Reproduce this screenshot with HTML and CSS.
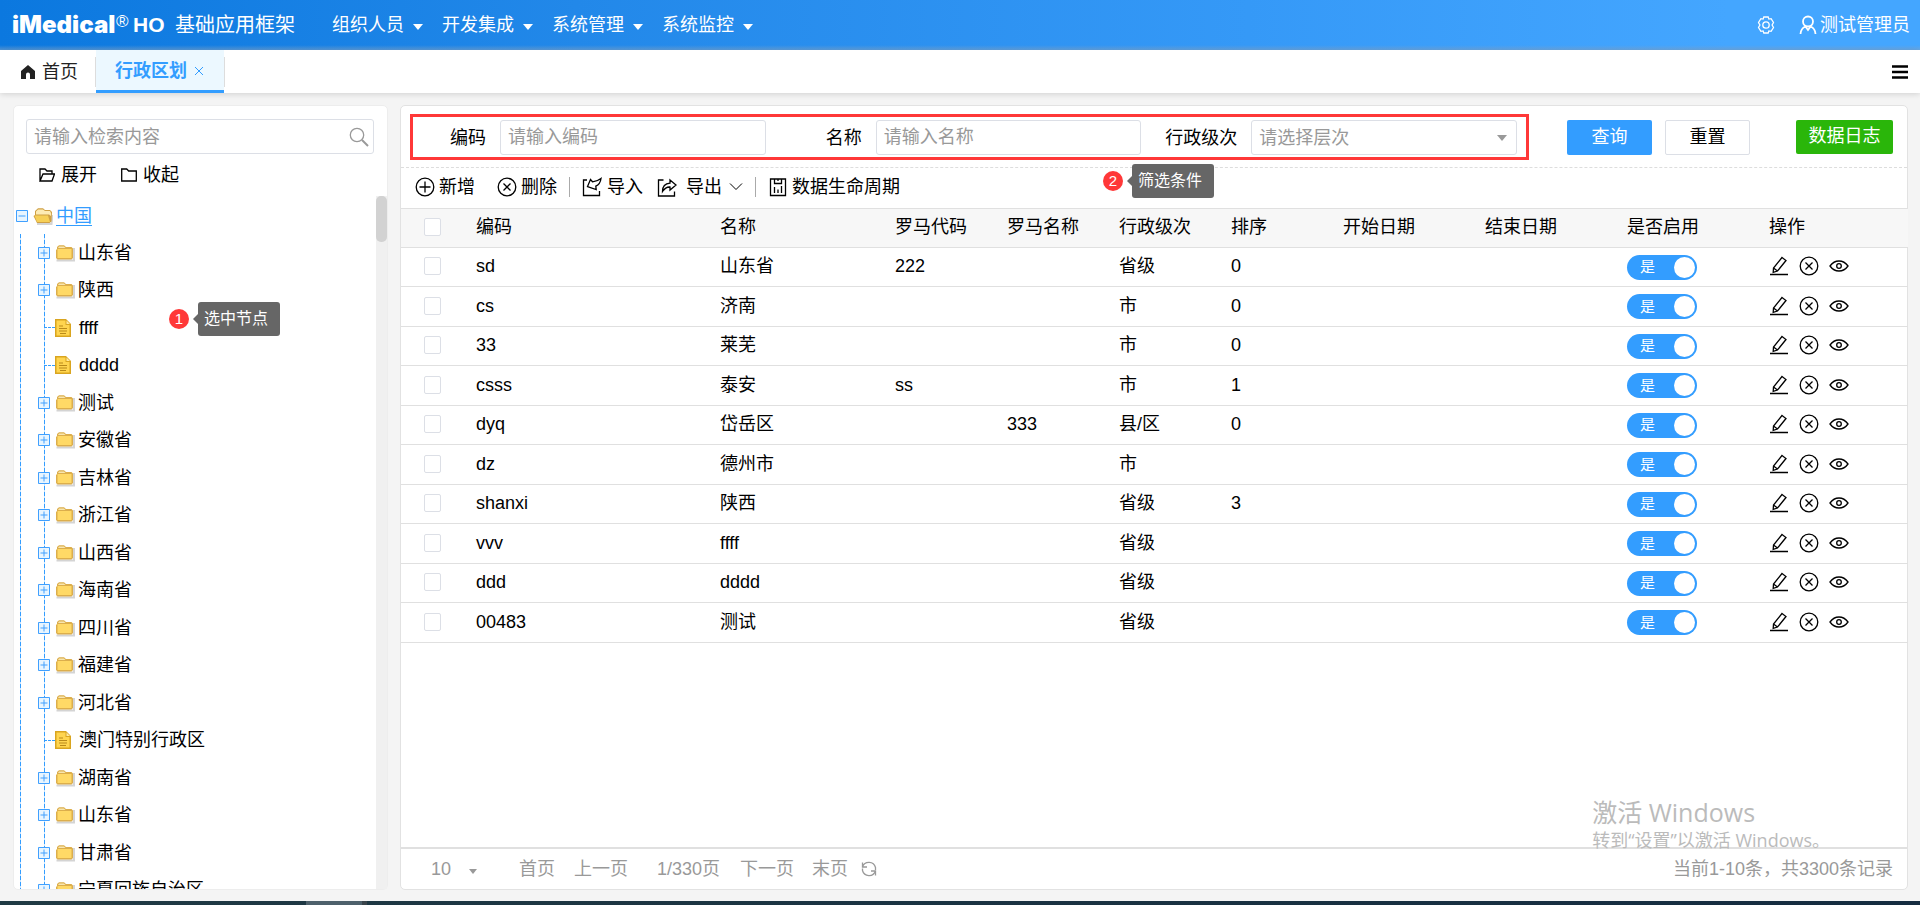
FILE: index.html
```html
<!DOCTYPE html>
<html lang="zh-CN">
<head>
<meta charset="utf-8">
<title>行政区划</title>
<link rel="stylesheet" href="styles.css">
</head>
<body>
<svg class="sprite" aria-hidden="true">
  <symbol id="i-plus" viewBox="0 0 20 20"><circle cx="10" cy="10" r="8.8"/><path d="M10 4.500v11M4.500 10h11"/></symbol>
  <symbol id="i-close" viewBox="0 0 20 20"><circle cx="10" cy="10" r="8.8"/><path d="M6.500 6.500l7 7M13.500 6.500l-7 7"/></symbol>
  <symbol id="i-import" viewBox="0 0 20 20"><path d="M5 3H1.500v15.500h16V14"/><path d="M19 1.500c-.5 4-2.500 6.500-5.200 7.700l.4 3.300L5.500 9.500 8.500 2.500l2 2.300C13.500 4.600 16.500 3.500 19 1.500z"/></symbol>
  <symbol id="i-export" viewBox="0 0 20 20"><path d="M6.500 3H1.500v16h16v-4.500"/><path d="M13 3l6 5-6 5v-3c-3.500-.3-5.500 1.500-7.500 4.500 0-5 3-8 7.500-8.300z"/></symbol>
  <symbol id="i-chart" viewBox="0 0 20 20"><path d="M2.500 2h15v16.500h-15zM6.500 2v4.500h7V2M10 2v2M6.500 10v6M10 12.500V16M13.500 9v7"/></symbol>
  <symbol id="i-edit" viewBox="0 0 20 20"><path d="M13 1.500l4 3L8.500 15l-4.300 1.300.3-4.300zM4.500 12l4 3M1 18.500h18"/></symbol>
  <symbol id="i-eye" viewBox="0 0 20 20"><path d="M1 10c2.500-3.500 5.500-5 9-5s6.500 1.500 9 5c-2.500 3.500-5.500 5-9 5s-6.500-1.500-9-5z"/><circle cx="10" cy="10" r="2.300"/></symbol>
  <symbol id="i-expand" viewBox="0 0 12 12"><path d="M.5.500h11v11H.5zM2.500 6h7M6 2.500v7"/></symbol>
  <symbol id="i-collapse" viewBox="0 0 12 12"><path d="M.5.500h11v11H.5zM2.500 6h7"/></symbol>
  <symbol id="i-folder" viewBox="0 0 20 18"><path d="M1.500 16.500h17.500V4" stroke="#aaa" stroke-opacity=".5" stroke-width="2" fill="none"/><path d="M2 5V3l2-1.800h5L11 3h5.500l1.500 1.500V14l-1.500 1.500h-14L1 14V6z" fill="#dcae4c"/><path d="M4 2.500h5L10.500 4H3z" fill="#f7e6b0"/><path d="M2.500 5h14v9h-14z" fill="#ffd966"/></symbol>
  <symbol id="i-folder-open" viewBox="0 0 20 18"><path d="M4 17h14.500l1-9" stroke="#aaa" stroke-opacity=".5" stroke-width="2" fill="none"/><path d="M2 8V4l3-2.800h5L12 3h5l2 2-.5 9.500-2 1.500H4L.5 9z" fill="#cfa044"/><path d="M5 2.500h5L12 4h5l1 2v3l-2-1.500H3V4.500z" fill="#fdebb4"/><path d="M1.500 8.500H15L17 15H4z" fill="#f6cf57"/></symbol>
  <symbol id="i-doc" viewBox="0 0 16 18"><path d="M0 0h11l5 5v13H0z" fill="#d9a520"/><path d="M1.500 1.500h9V6h4v10.500h-13z" fill="#ffd54f"/><path d="M11.500 1.500l3.500 3.500h-3.500z" fill="#ffe9a0"/><path d="M4 7h4M4 9.500h8M4 12h8M5 14.500h6" stroke="#b98a1a" stroke-width="1.200"/></symbol>
</svg>

<header class="topbar">
  <div class="brand"><span class="brand-name">iMedical</span><span class="brand-reg">®</span><span class="brand-ho">HO</span><span class="brand-title">基础应用框架</span></div>
  <nav class="menu">
    <a href="#">组织人员<i class="caret"></i></a>
    <a href="#">开发集成<i class="caret"></i></a>
    <a href="#">系统管理<i class="caret"></i></a>
    <a href="#">系统监控<i class="caret"></i></a>
  </nav>
  <button class="gear" aria-label="设置"><svg class="icon" viewBox="0 0 18 18"><path d="M6.800 1h4.400l.7 2.100 2.200-.4L16.500 6.500 15.100 9l1.400 2.500-2.400 3.800-2.200-.4-.7 2.100H6.800l-.7-2.100-2.200.4-2.400-3.800L2.900 9 1.500 6.500l2.400-3.800 2.200.4z"/><circle cx="9" cy="9" r="3.200"/></svg></button>
  <a class="user" href="#"><svg class="icon user-icon" viewBox="0 0 18 20"><circle cx="9" cy="6.500" r="5"/><path d="M1.500 19c.2-4 2-6.200 5-7.500L9 15l2.500-3.500c3 1.300 4.800 3.500 5 7.500"/></svg>测试管理员</a>
</header>

<div class="tabs">
  <a class="tab tab-home" href="#"><svg class="home" viewBox="0 0 14 14"><path d="M7 0l7 6v8H9V9.500a2 2 0 0 0-4 0V14H0V6z"/></svg>首页</a>
  <a class="tab tab-active" href="#">行政区划<svg class="icon tab-close" viewBox="0 0 10 10"><path d="M1 1l8 8M9 1L1 9"/></svg></a>
  <i class="tab-sep"></i>
  <button class="burger" aria-label="菜单"><svg viewBox="0 0 16 14"><path d="M0 1.500h16M0 7h16M0 12.500h16" stroke="#000" stroke-width="2.600"/></svg></button>
</div>

<main class="workspace">
  <aside class="panel side">
    <label class="search"><input type="search" placeholder="请输入检索内容" aria-label="检索内容"><svg class="icon search-icon" viewBox="0 0 20 20"><circle cx="8" cy="8" r="6.700"/><path d="M13 13l6 6" stroke-width="2"/></svg></label>
    <div class="tree-actions">
      <button><svg class="icon small-icon" viewBox="0 0 16 16"><path d="M1 14V2h5l2 2h5v3M1 14l3-7h11.500L13 14z"/></svg>展开</button>
      <button><svg class="icon small-icon" viewBox="0 0 16 16"><path d="M.7 14V2h5l2 2h7.600v10z"/></svg>收起</button>
    </div>
    <div class="tree-area">
      <div class="tree">
        <div class="node root"><svg class="icon box"><use href="#i-collapse"/></svg><svg class="folder"><use href="#i-folder-open"/></svg><a href="#">中国</a></div>
        <ul class="branch">
          <li class="node"><svg class="icon box"><use href="#i-expand"/></svg><svg class="folder"><use href="#i-folder"/></svg>山东省</li>
          <li class="node"><svg class="icon box"><use href="#i-expand"/></svg><svg class="folder"><use href="#i-folder"/></svg>陕西</li>
          <li class="node leaf"><svg class="doc"><use href="#i-doc"/></svg>ffff</li>
          <li class="node leaf"><svg class="doc"><use href="#i-doc"/></svg>dddd</li>
          <li class="node"><svg class="icon box"><use href="#i-expand"/></svg><svg class="folder"><use href="#i-folder"/></svg>测试</li>
          <li class="node"><svg class="icon box"><use href="#i-expand"/></svg><svg class="folder"><use href="#i-folder"/></svg>安徽省</li>
          <li class="node"><svg class="icon box"><use href="#i-expand"/></svg><svg class="folder"><use href="#i-folder"/></svg>吉林省</li>
          <li class="node"><svg class="icon box"><use href="#i-expand"/></svg><svg class="folder"><use href="#i-folder"/></svg>浙江省</li>
          <li class="node"><svg class="icon box"><use href="#i-expand"/></svg><svg class="folder"><use href="#i-folder"/></svg>山西省</li>
          <li class="node"><svg class="icon box"><use href="#i-expand"/></svg><svg class="folder"><use href="#i-folder"/></svg>海南省</li>
          <li class="node"><svg class="icon box"><use href="#i-expand"/></svg><svg class="folder"><use href="#i-folder"/></svg>四川省</li>
          <li class="node"><svg class="icon box"><use href="#i-expand"/></svg><svg class="folder"><use href="#i-folder"/></svg>福建省</li>
          <li class="node"><svg class="icon box"><use href="#i-expand"/></svg><svg class="folder"><use href="#i-folder"/></svg>河北省</li>
          <li class="node leaf"><svg class="doc"><use href="#i-doc"/></svg>澳门特别行政区</li>
          <li class="node"><svg class="icon box"><use href="#i-expand"/></svg><svg class="folder"><use href="#i-folder"/></svg>湖南省</li>
          <li class="node"><svg class="icon box"><use href="#i-expand"/></svg><svg class="folder"><use href="#i-folder"/></svg>山东省</li>
          <li class="node"><svg class="icon box"><use href="#i-expand"/></svg><svg class="folder"><use href="#i-folder"/></svg>甘肃省</li>
          <li class="node"><svg class="icon box"><use href="#i-expand"/></svg><svg class="folder"><use href="#i-folder"/></svg>宁夏回族自治区</li>
        </ul>
      </div>
      <div class="scroll-track"><div class="scroll-thumb"></div></div>
    </div>
    <div class="callout callout-node"><b>1</b><span>选中节点</span></div>
  </aside>

  <section class="panel content">
    <form class="filters">
      <div class="filter-box">
        <div class="field first"><label for="code">编码</label><input id="code" type="text" placeholder="请输入编码"></div>
        <div class="field"><label for="name">名称</label><input id="name" type="text" placeholder="请输入名称"></div>
        <div class="field"><label for="level">行政级次</label><div class="select"><select id="level"><option>请选择层次</option></select></div></div>
      </div>
      <div class="filter-buttons">
        <button type="button" class="btn primary">查询</button>
        <button type="button" class="btn plain">重置</button>
        <button type="button" class="btn log">数据日志</button>
      </div>
    </form>
    <div class="toolbar">
      <button class="tool add"><svg class="icon"><use href="#i-plus"/></svg>新增</button>
      <button class="tool del"><svg class="icon"><use href="#i-close"/></svg>删除</button>
      <button class="tool imp"><svg class="icon"><use href="#i-import"/></svg>导入</button>
      <button class="tool exp"><svg class="icon"><use href="#i-export"/></svg>导出<svg class="icon chevron" viewBox="0 0 14 10"><path d="M1 1.500l6 6 6-6"/></svg></button>
      <button class="tool life"><svg class="icon"><use href="#i-chart"/></svg>数据生命周期</button>
      <div class="callout callout-filter"><b>2</b><span>筛选条件</span></div>
    </div>
    <table class="grid">
      <colgroup><col class="c-check"><col class="c-code"><col class="c-name"><col class="c-s"><col class="c-s"><col class="c-s"><col class="c-s"><col class="c-m"><col class="c-m"><col class="c-m"><col class="c-op"></colgroup>
      <thead><tr><th><input type="checkbox" aria-label="全选"></th><th>编码</th><th>名称</th><th>罗马代码</th><th>罗马名称</th><th>行政级次</th><th>排序</th><th>开始日期</th><th>结束日期</th><th>是否启用</th><th>操作</th></tr></thead>
      <tbody>
        <tr><td><input type="checkbox" aria-label="选择"></td><td>sd</td><td>山东省</td><td>222</td><td></td><td>省级</td><td>0</td><td></td><td></td><td><label class="toggle">是<input type="checkbox" checked></label></td><td><div class="ops"><button aria-label="编辑"><svg class="icon"><use href="#i-edit"/></svg></button><button aria-label="删除"><svg class="icon"><use href="#i-close"/></svg></button><button aria-label="查看"><svg class="icon"><use href="#i-eye"/></svg></button></div></td></tr>
        <tr><td><input type="checkbox" aria-label="选择"></td><td>cs</td><td>济南</td><td></td><td></td><td>市</td><td>0</td><td></td><td></td><td><label class="toggle">是<input type="checkbox" checked></label></td><td><div class="ops"><button aria-label="编辑"><svg class="icon"><use href="#i-edit"/></svg></button><button aria-label="删除"><svg class="icon"><use href="#i-close"/></svg></button><button aria-label="查看"><svg class="icon"><use href="#i-eye"/></svg></button></div></td></tr>
        <tr><td><input type="checkbox" aria-label="选择"></td><td>33</td><td>莱芜</td><td></td><td></td><td>市</td><td>0</td><td></td><td></td><td><label class="toggle">是<input type="checkbox" checked></label></td><td><div class="ops"><button aria-label="编辑"><svg class="icon"><use href="#i-edit"/></svg></button><button aria-label="删除"><svg class="icon"><use href="#i-close"/></svg></button><button aria-label="查看"><svg class="icon"><use href="#i-eye"/></svg></button></div></td></tr>
        <tr><td><input type="checkbox" aria-label="选择"></td><td>csss</td><td>泰安</td><td>ss</td><td></td><td>市</td><td>1</td><td></td><td></td><td><label class="toggle">是<input type="checkbox" checked></label></td><td><div class="ops"><button aria-label="编辑"><svg class="icon"><use href="#i-edit"/></svg></button><button aria-label="删除"><svg class="icon"><use href="#i-close"/></svg></button><button aria-label="查看"><svg class="icon"><use href="#i-eye"/></svg></button></div></td></tr>
        <tr><td><input type="checkbox" aria-label="选择"></td><td>dyq</td><td>岱岳区</td><td></td><td>333</td><td>县/区</td><td>0</td><td></td><td></td><td><label class="toggle">是<input type="checkbox" checked></label></td><td><div class="ops"><button aria-label="编辑"><svg class="icon"><use href="#i-edit"/></svg></button><button aria-label="删除"><svg class="icon"><use href="#i-close"/></svg></button><button aria-label="查看"><svg class="icon"><use href="#i-eye"/></svg></button></div></td></tr>
        <tr><td><input type="checkbox" aria-label="选择"></td><td>dz</td><td>德州市</td><td></td><td></td><td>市</td><td></td><td></td><td></td><td><label class="toggle">是<input type="checkbox" checked></label></td><td><div class="ops"><button aria-label="编辑"><svg class="icon"><use href="#i-edit"/></svg></button><button aria-label="删除"><svg class="icon"><use href="#i-close"/></svg></button><button aria-label="查看"><svg class="icon"><use href="#i-eye"/></svg></button></div></td></tr>
        <tr><td><input type="checkbox" aria-label="选择"></td><td>shanxi</td><td>陕西</td><td></td><td></td><td>省级</td><td>3</td><td></td><td></td><td><label class="toggle">是<input type="checkbox" checked></label></td><td><div class="ops"><button aria-label="编辑"><svg class="icon"><use href="#i-edit"/></svg></button><button aria-label="删除"><svg class="icon"><use href="#i-close"/></svg></button><button aria-label="查看"><svg class="icon"><use href="#i-eye"/></svg></button></div></td></tr>
        <tr><td><input type="checkbox" aria-label="选择"></td><td>vvv</td><td>ffff</td><td></td><td></td><td>省级</td><td></td><td></td><td></td><td><label class="toggle">是<input type="checkbox" checked></label></td><td><div class="ops"><button aria-label="编辑"><svg class="icon"><use href="#i-edit"/></svg></button><button aria-label="删除"><svg class="icon"><use href="#i-close"/></svg></button><button aria-label="查看"><svg class="icon"><use href="#i-eye"/></svg></button></div></td></tr>
        <tr><td><input type="checkbox" aria-label="选择"></td><td>ddd</td><td>dddd</td><td></td><td></td><td>省级</td><td></td><td></td><td></td><td><label class="toggle">是<input type="checkbox" checked></label></td><td><div class="ops"><button aria-label="编辑"><svg class="icon"><use href="#i-edit"/></svg></button><button aria-label="删除"><svg class="icon"><use href="#i-close"/></svg></button><button aria-label="查看"><svg class="icon"><use href="#i-eye"/></svg></button></div></td></tr>
        <tr><td><input type="checkbox" aria-label="选择"></td><td>00483</td><td>测试</td><td></td><td></td><td>省级</td><td></td><td></td><td></td><td><label class="toggle">是<input type="checkbox" checked></label></td><td><div class="ops"><button aria-label="编辑"><svg class="icon"><use href="#i-edit"/></svg></button><button aria-label="删除"><svg class="icon"><use href="#i-close"/></svg></button><button aria-label="查看"><svg class="icon"><use href="#i-eye"/></svg></button></div></td></tr>
      </tbody>
    </table>
    <footer class="pager">
      <div class="select page-size"><select aria-label="每页条数"><option>10</option></select></div>
      <a class="pg-first" href="#">首页</a>
      <a class="pg-prev" href="#">上一页</a>
      <span class="pg-now">1/330页</span>
      <a class="pg-next" href="#">下一页</a>
      <a class="pg-last" href="#">末页</a>
      <button class="refresh" aria-label="刷新"><svg class="icon" viewBox="0 0 16 16"><path d="M1.500 6A6.800 6.800 0 0 1 14.500 6.500V9M1.500 1.500V6H6M14.500 10A6.800 6.800 0 0 1 1.500 9.500V7.500M14.500 14.500V10H10"/></svg></button>
      <span class="total">当前1-10条，共3300条记录</span>
    </footer>
  </section>
</main>
<div class="taskbar"></div>
<div class="watermark"><div class="wm-title">激活 Windows</div><div>转到“设置”以激活 Windows。</div></div>
</body>
</html>
```
FILE: styles.css
```css
* { box-sizing: border-box; }
body {
  margin: 0;
  height: 100vh;
  display: flex;
  flex-direction: column;
  overflow: hidden;
  background: #f4f4f4;
  color: #000;
  font: 400 18px/24px "Liberation Sans", "Noto Sans CJK SC", sans-serif;
}
a { color: inherit; text-decoration: none; }
button, input, select { font: inherit; color: inherit; }
button { border: 0; padding: 0; background: none; display: flex; align-items: center; white-space: nowrap; }
.sprite { display: none; }
.icon { width: 20px; height: 20px; fill: none; stroke: currentColor; stroke-width: 1.3; flex: none; }

/* top bar */
.topbar {
  flex: none;
  height: 50px;
  display: flex;
  align-items: center;
  padding: 0 10px 0 12px;
  color: #fff;
  background: linear-gradient(to bottom, transparent 45px, rgba(130, 170, 210, .6)), linear-gradient(to right, #0b78df, #2288e9 30%, #3599f7 65%, #44a6ff 90%);
}
.brand { display: flex; align-items: center; width: 320px; white-space: nowrap; }
.brand-name { font: 900 24px/30px Inter, sans-serif; width: 104px; }
.brand-reg { font: 400 17px/24px "Liberation Sans", sans-serif; width: 17px; align-self: flex-start; }
.brand-ho { font: 700 21px/28px "Liberation Sans", sans-serif; width: 42px; }
.brand-title { font-size: 20px; }
.menu { display: flex; flex: 1; }
.menu a { display: flex; align-items: center; gap: 9px; width: 110px; white-space: nowrap; }
.caret { border: 5px solid transparent; border-top: 6px solid currentColor; border-bottom: 0; margin-top: 4px; }
.gear { color: #fff; margin-right: 24px; }
.gear .icon { width: 18px; height: 18px; }
.user { display: flex; align-items: center; gap: 3px; }
.user-icon { width: 18px; stroke-width: 1.8; }

/* tabs */
.tabs {
  flex: none;
  height: 43px;
  display: flex;
  align-items: center;
  background: #fff;
  box-shadow: 0 1px 6px rgba(0, 0, 0, .15);
  position: relative;
}
.tab { display: flex; align-items: center; color: #222; }
.tab-home { width: 96px; height: 30px; padding-left: 21px; gap: 7px; border-right: 1px solid #ddd; }
.tab-active {
  width: 128px;
  height: 43px;
  padding: 2px 0 0 19px;
  gap: 7px;
  color: #339dff;
  font-weight: 700;
  background: #ecf8ff;
  border-bottom: 3px solid #339dff;
}
.tab-sep { width: 1px; height: 30px; background: #ddd; }
.home { width: 14px; height: 14px; fill: #222; }
.tab-close { width: 10px; height: 10px; stroke-width: 1; }
.burger { margin: 0 12px 0 auto; }
.burger svg { width: 16px; height: 14px; }

/* panels */
.workspace { flex: 1; min-height: 0; display: flex; gap: 12px; padding: 12px 12px 11px 13px; }
.panel { background: #fff; border: 1px solid #e2e2e2; border-radius: 5px; display: flex; flex-direction: column; position: relative; }
.side { width: 375px; flex: none; border-color: #ededed; }
.content { flex: 1; min-width: 0; }
input::placeholder { color: #999; opacity: 1; }

.search { margin: 13px 13px 0 12px; height: 35px; border: 1px solid #dcdfe6; border-radius: 3px; display: flex; align-items: center; padding: 0 4px 0 7px; color: #999; }
.search input { flex: 1; min-width: 0; border: 0; padding: 0; background: none; outline: 0; appearance: none; }
.tree-actions { display: flex; gap: 24px; padding: 9px 0 0 25px; }
.tree-actions button { gap: 6px; }
.small-icon { width: 16px; height: 16px; }
.tree-area { flex: 1; min-height: 0; margin-top: 9px; display: flex; overflow: hidden; }
.tree { flex: 1; overflow: hidden; padding: 0 0 0 2px; }
.node { display: flex; align-items: center; height: 38px; gap: 5px; white-space: nowrap; }
.branch .node:nth-child(odd) { height: 37px; }
.root { height: 38px; padding-top: 2px; }
.root a { color: #339dff; text-decoration: underline; text-underline-offset: 3px; text-decoration-thickness: 1px; }
.box { width: 12px; height: 12px; stroke-width: 1; color: #40a0ff; background: #e8f5ff; }
.folder { width: 20px; height: 18px; margin-right: -2px; flex: none; }
.doc { width: 16px; height: 18px; margin-right: 3px; flex: none; }
.branch {
  list-style: none;
  margin: 0 0 0 4px;
  padding: 0 0 0 18px;
  background:
    repeating-linear-gradient(to bottom, #339dff 0 4px, #c4e2ff 4px 6px) 0 0 / 1px 100% no-repeat,
    repeating-linear-gradient(to bottom, #339dff 0 4px, #c4e2ff 4px 6px) 24px 0 / 1px 100% no-repeat;
}
.leaf::before { content: ""; width: 11px; margin-left: 6px; margin-right: -5px; border-top: 1px dashed #339dff; }
.scroll-track { width: 11px; background: #f0f0f0; }
.scroll-thumb { height: 46px; border-radius: 5px; background: #d2d2d2; }

/* callouts */
.callout { position: absolute; display: flex; align-items: center; gap: 9px; font-size: 16px; line-height: 34px; color: #fff; }
.callout b { width: 20px; height: 20px; border-radius: 50%; background: #ff3838; font-weight: 400; font-size: 15px; line-height: 20px; text-align: center; }
.callout span { width: 82px; height: 34px; padding-left: 6px; border-radius: 3px; background: #666; position: relative; }
.callout span::before { content: ""; position: absolute; left: -5px; top: 12px; border: 5px solid transparent; border-right-color: #666; border-left: 0; }
.callout-node { left: 155px; top: 196px; }
.callout-filter { left: 702px; top: -4px; }

/* filters */
.filters { display: flex; align-items: flex-start; padding: 8px 14px 7px 9px; border-bottom: 1px dashed #ddd; }
.filter-box { flex: 1; min-width: 0; display: flex; border: 3px solid #ff3838; padding: 3px 9px 2px 0; }
.field { flex: 1 1 376px; min-width: 0; display: flex; align-items: center; }
.field.first { flex: 1 1 353px; }
.field label { width: 110px; padding-right: 14px; text-align: right; flex: none; white-space: nowrap; }
.field.first label { width: 87px; }
.field > input, .field > .select { flex: 1; min-width: 0; height: 35px; border: 1px solid #dcdfe6; border-radius: 3px; background: #fff; }
.field > input { padding: 0 7px; }
.select { display: flex; position: relative; color: #999; }
.select select { flex: 1; border: 0; padding: 0 7px; background: none; appearance: none; outline: 0; }
.select::after { content: ""; position: absolute; right: 9px; top: 14px; border: 5px solid transparent; border-top: 6px solid #999; border-bottom: 0; pointer-events: none; }
.filter-buttons { display: flex; gap: 13px; padding: 6px 0 0 38px; }
.btn { height: 35px; width: 85px; border-radius: 2px; justify-content: center; padding-bottom: 2px; }
.primary { background: #339dff; color: #fff; }
.plain { border: 1px solid #dcdfe6; }
.log { width: 97px; height: 34px; margin-left: 33px; background: #2ab60a; color: #fff; }

/* toolbar */
.toolbar { height: 41px; display: flex; align-items: center; padding: 0 0 3px 14px; position: relative; border-bottom: 1px solid #e0e0e0; }
.tool { gap: 4px; height: 20px; }
.add { width: 82px; }
.del { width: 72px; }
.imp { width: 88px; border-left: 1px solid #aaa; padding-left: 12px; gap: 5px; }
.exp { width: 98px; gap: 9px; }
.exp .chevron { margin-left: -2px; }
.life { border-left: 1px solid #aaa; padding-left: 12px; }
.chevron { width: 14px; height: 10px; stroke-width: 1; }

/* data grid */
.grid { width: 100%; table-layout: fixed; border-collapse: separate; border-spacing: 0; }
.c-check { width: 65px; }
.c-code { width: 244px; }
.c-name { width: 175px; }
.c-s { width: 112px; }
.c-m { width: 142px; }
.c-op { width: 149px; }
.grid th, .grid td { height: 39px; padding: 0 0 2px 10px; border-bottom: 1px solid #e0e0e0; text-align: left; font-weight: inherit; line-height: 24px; white-space: nowrap; }
.grid th { background: #f7f7f7; }
.grid tbody tr:nth-child(even) td { height: 40px; }
.grid th:first-child, .grid td:first-child { padding-left: 23px; }
.grid input { display: block; appearance: none; width: 17px; height: 18px; margin: 0; border: 1px solid #dcdfe6; border-radius: 2px; background: #fff; }
.grid .toggle { display: flex; align-items: center; justify-content: space-between; width: 70px; height: 25px; margin-top: 2px; padding: 0 2px 0 13px; border-radius: 13px; background: #339dff; color: #fff; font-size: 15px; }
.grid .toggle input { width: 21px; height: 21px; border: 0; border-radius: 50%; }
.ops { display: flex; gap: 10px; }

/* pager */
.pager { margin-top: auto; height: 42px; display: flex; align-items: center; border-top: 2px solid #e0e0e0; padding: 0 14px 0 23px; color: #999; white-space: nowrap; }
.page-size { width: 64px; }
.page-size::after { right: 11px; top: 12px; border-width: 5px 4px 0; }
.pg-first { margin-left: 31px; width: 55px; }
.pg-prev { width: 83px; }
.pg-now { width: 83px; }
.pg-next { width: 72px; }
.pg-last { width: 49px; }
.refresh .icon { width: 16px; height: 16px; }
.total { margin-left: auto; }

.taskbar { flex: none; height: 4px; background: linear-gradient(to right, transparent 306px, #4d606b 306px 362px, #3a444b 362px 367px, transparent 367px), linear-gradient(to right, #203a44, #152c40); }
.watermark { position: absolute; right: 90px; bottom: 53px; color: #bbb; font: 400 18px/24px "Open Sans", "Noto Sans CJK SC", sans-serif; pointer-events: none; white-space: nowrap; }
.wm-title { font-size: 25px; line-height: 32px; }
```
